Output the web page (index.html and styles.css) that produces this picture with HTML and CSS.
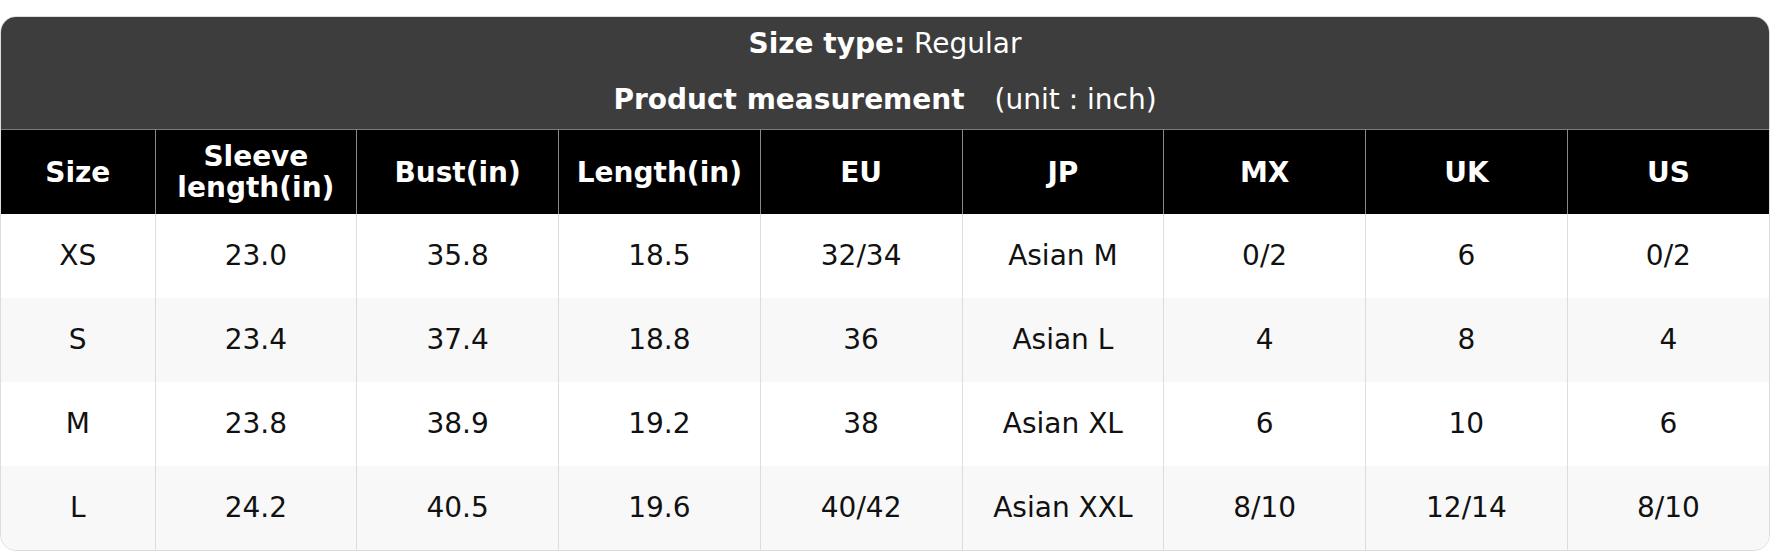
FILE: index.html
```html
<!DOCTYPE html>
<html>
<head>
<meta charset="utf-8">
<link rel="stylesheet" href="styles.css">
</head>
<body>
<div class="chart">
  <div class="banner">
    <div class="banner-line first"><b>Size type:</b> Regular</div>
    <div class="banner-line second"><b>Product measurement</b><span class="unit">(unit : inch)</span></div>
  </div>
  <table class="sizes">
    <colgroup>
      <col class="col-first"><col><col><col><col><col><col><col><col>
    </colgroup>
    <thead>
      <tr>
        <th>Size</th><th>Sleeve length(in)</th><th>Bust(in)</th><th>Length(in)</th><th>EU</th><th>JP</th><th>MX</th><th>UK</th><th>US</th>
      </tr>
    </thead>
    <tbody>
      <tr><td>XS</td><td>23.0</td><td>35.8</td><td>18.5</td><td>32/34</td><td>Asian M</td><td>0/2</td><td>6</td><td>0/2</td></tr>
      <tr><td>S</td><td>23.4</td><td>37.4</td><td>18.8</td><td>36</td><td>Asian L</td><td>4</td><td>8</td><td>4</td></tr>
      <tr><td>M</td><td>23.8</td><td>38.9</td><td>19.2</td><td>38</td><td>Asian XL</td><td>6</td><td>10</td><td>6</td></tr>
      <tr><td>L</td><td>24.2</td><td>40.5</td><td>19.6</td><td>40/42</td><td>Asian XXL</td><td>8/10</td><td>12/14</td><td>8/10</td></tr>
    </tbody>
  </table>
</div>
</body>
</html>
```

FILE: styles.css
```css
html, body {
  margin: 0;
  padding: 0;
  background: #ffffff;
}
body {
  padding-top: 16px;
  font-family: "DejaVu Sans", Verdana, sans-serif;
  font-size: 28px;
}
.chart {
  width: 1770px;
  box-sizing: border-box;
  border: 1px solid #dcdcdc;
  border-radius: 16px;
  overflow: hidden;
  background: #ffffff;
}
.banner {
  background: #3d3d3d;
  color: #ffffff;
  text-align: center;
  border-bottom: 1px solid #7a7a7a;
}
.banner-line.first {
  height: 54px;
  line-height: 54px;
}
.banner-line.second {
  height: 58px;
  line-height: 58px;
}
.banner b {
  font-weight: bold;
}
.unit {
  margin-left: 30px;
}
.sizes {
  width: 100%;
  border-collapse: collapse;
  table-layout: fixed;
}
.col-first {
  width: 154px;
}
.sizes th {
  background: #000000;
  color: #ffffff;
  font-weight: bold;
  line-height: 31px;
  padding: 11px 6px;
  border-left: 1px solid #888888;
  text-align: center;
}
.sizes td {
  color: #111111;
  line-height: 32px;
  padding: 26px 6px;
  border-left: 1px solid #dddddd;
  text-align: center;
}
.sizes th:first-child,
.sizes td:first-child {
  border-left: none;
}
.sizes tbody tr:nth-child(even) td {
  background: #f8f8f8;
}
```
